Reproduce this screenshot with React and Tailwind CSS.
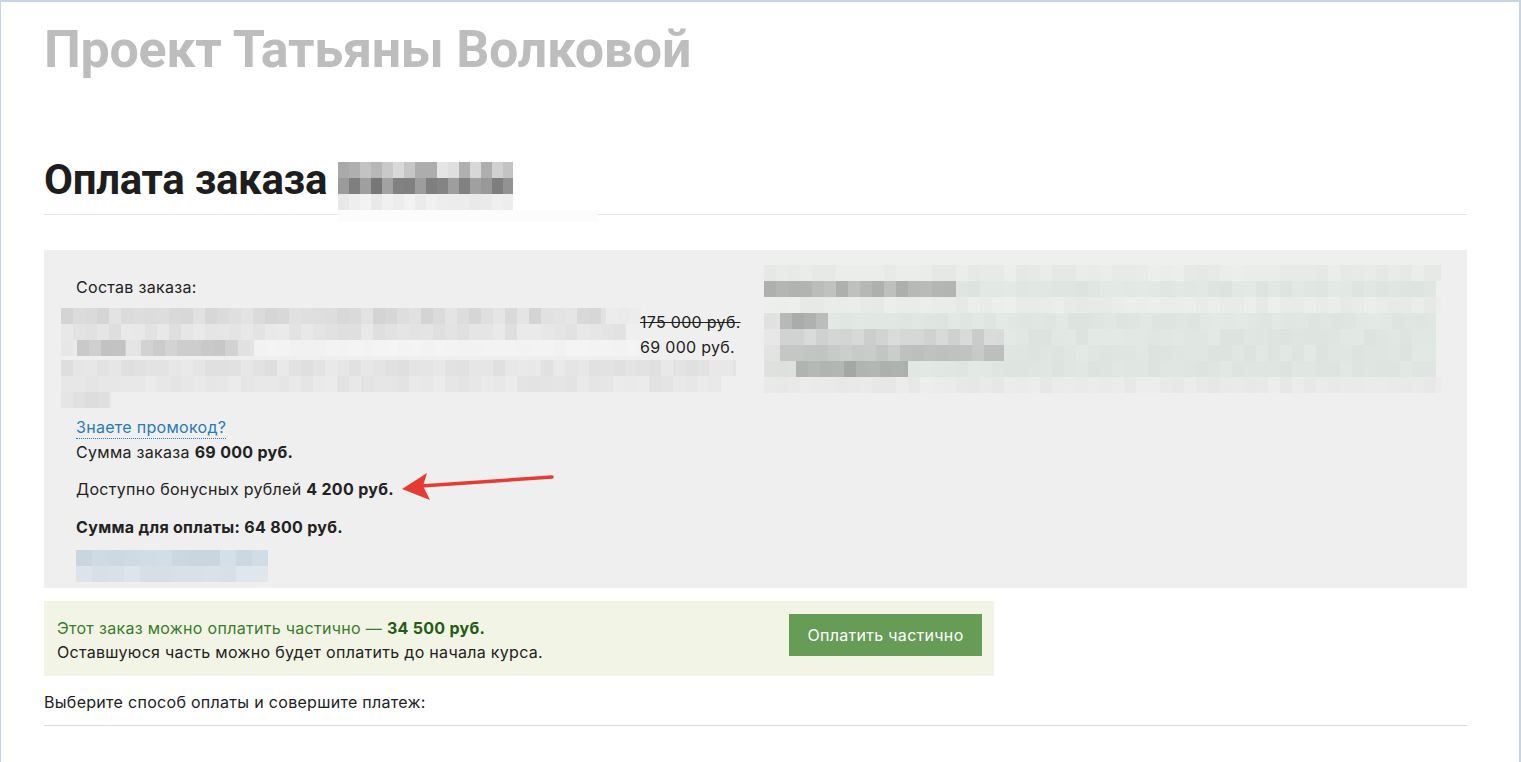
import React from 'react';

// small seeded random so the redaction mosaics stay the same on every render
function rng(seed) {
  let s = seed;
  return () => {
    s = (s * 16807) % 2147483647;
    return (s - 1) / 2147483646;
  };
}

function Mosaic({ width, height, rows, cw = 12, ch = 16, seed = 7, className = '' }) {
  const rand = rng(seed);
  const rects = [];
  rows.forEach((segs, r) => {
    segs.forEach(([from, to, c, j = 8]) => {
      for (let x = from; x < to; x += cw) {
        const d = Math.round((rand() - 0.5) * 2 * j);
        const col = c.map(v => Math.max(0, Math.min(255, v + d)));
        rects.push(
          <rect key={`${r}-${x}`} x={x} y={r * ch} width={Math.min(cw, to - x)} height={ch}
            fill={`rgb(${col[0]},${col[1]},${col[2]})`} />
        );
      }
    });
  });
  return (
    <svg width={width} height={height} className={className} shapeRendering="crispEdges">
      {rects}
    </svg>
  );
}

const G = (v) => [v, v, v];

const itemTop = [
  [[0, 545, G(221), 9], [545, 580, G(232), 4]],
  [[0, 565, G(228), 6]],
  [[0, 16, G(232), 3], [16, 65, G(200), 8], [65, 80, G(228), 3], [80, 177, G(205), 8], [177, 193, G(226), 3], [193, 580, G(243), 2]],
];
const itemBottom = [
  [[0, 675, G(228), 6]],
  [[0, 660, G(231), 5]],
  [[0, 50, G(226), 6]],
];

const headerRows = [
  [[0, 175, G(200), 30]],
  [[0, 175, G(140), 25]],
  [[0, 175, G(238), 8]],
];

const GR = [224, 230, 225];
const rightRows = [
  [[0, 677, [232, 235, 232], 3]],
  [[0, 192, [185, 187, 186], 12], [192, 672, GR, 3]],
  [[0, 677, [233, 236, 233], 3]],
  [[0, 16, G(225), 3], [16, 64, [178, 180, 179], 10], [64, 672, GR, 3]],
  [[0, 16, G(228), 3], [16, 240, [210, 212, 211], 8], [240, 672, GR, 3]],
  [[0, 16, G(226), 3], [16, 240, [195, 198, 196], 8], [240, 672, GR, 3]],
  [[0, 32, [220, 222, 220], 4], [32, 144, [172, 176, 173], 10], [144, 672, GR, 3]],
  [[0, 677, [233, 234, 233], 3]],
];

const blueRows = [
  [[0, 192, [208, 220, 229], 6]],
  [[0, 192, [220, 228, 233], 5]],
];

export default function App() {
  return (
    <div className="min-h-screen bg-[#c7d5e3] pt-[2px] pl-[1px] pr-[2px]" style={{ fontFamily: 'Inter, "Noto Sans", sans-serif' }}>
      <div className="bg-white min-h-[760px] pl-[43px] pr-[52px] text-[16px] tracking-[0.3px] text-[#222]">
        <h1 className="pt-[16px] text-[52px] leading-[64px] font-bold text-[#bdbdbd] tracking-[-0.3px]" style={{ fontFamily: 'Roboto, sans-serif' }}>
          Проект Татьяны Волковой
        </h1>

        <div className="relative mt-[73px] border-b border-[#e6e6e6] pb-[9px]">
          <h2 className="text-[42px] leading-[50px] font-bold text-[#1e1e1e] tracking-[-0.3px]" style={{ fontFamily: 'Roboto, sans-serif' }}>
            Оплата заказа
          </h2>
          <div className="absolute left-[294px] top-[7px] flex flex-col">
            <Mosaic width={175} height={48} rows={headerRows} cw={11} seed={31} />
            <div className="w-[260px] h-[12px] bg-[#fcfcfc]" />
          </div>
        </div>

        <div className="relative mt-[35px] bg-[#efefef] flex">
          <div className="w-[704px] pl-[32px] pt-[26px] pb-[6px]">
            <div className="leading-[22px]">Состав заказа:</div>
            <div className="mt-[10px] flex">
              <Mosaic width={580} height={48} rows={itemTop} className="-ml-[15px]" seed={11} />
              <div className="-ml-[1px] pt-[2px] leading-[25px]">
                <div className="line-through">175 000 руб.</div>
                <div>69 000 руб.</div>
              </div>
            </div>
            <Mosaic width={675} height={48} rows={itemBottom} className="-ml-[15px]" seed={5} />

            <a href="#" className="inline-block mt-[8px] leading-[22px] text-[#2a7ab8] border-b border-dotted border-[#2a7ab8]">
              Знаете промокод?
            </a>
            <div className="mt-[2px] leading-[22px]">Сумма заказа <b>69 000 руб.</b></div>
            <div className="mt-[15px] leading-[22px]">Доступно бонусных рублей <b>4 200 руб.</b></div>
            <div className="mt-[16px] leading-[22px] font-bold">Сумма для оплаты: 64 800 руб.</div>
            <Mosaic width={192} height={32} rows={blueRows} cw={16} className="mt-[12px]" seed={3} />
          </div>

          <div className="flex-1 pt-[15px] pl-[16px]">
            <div className="h-[248px]">
              <Mosaic width={677} height={128} rows={rightRows} seed={19} />
            </div>
          </div>

          <svg className="absolute left-[353px] top-[221px]" width="160" height="34" viewBox="0 0 160 34">
            <path d="M155 6 L24 15" stroke="#e53b32" strokeWidth="3.5" strokeLinecap="round" />
            <path d="M5 18 L30 2 L26 15 L33 29 Z" fill="#e53b32" />
          </svg>
        </div>

        <div className="mt-[13px] w-[950px] bg-[#f2f5e6] flex items-start justify-between pl-[13px] pr-[12px] pt-[15px] pb-[12px]">
          <div className="leading-[24px]">
            <div className="text-[#3a7a2c]">Этот заказ можно оплатить частично — <b className="text-[#245c17]">34 500 руб.</b></div>
            <div>Оставшуюся часть можно будет оплатить до начала курса.</div>
          </div>
          <button className="-mt-[2px] w-[193px] h-[42px] bg-[#679c56] text-white text-[16px] tracking-[0.3px]">Оплатить частично</button>
        </div>

        <div className="mt-[15px] leading-[22px] pb-[12px] border-b border-[#dcdcdc]">
          Выберите способ оплаты и совершите платеж:
        </div>
      </div>
    </div>
  );
}
